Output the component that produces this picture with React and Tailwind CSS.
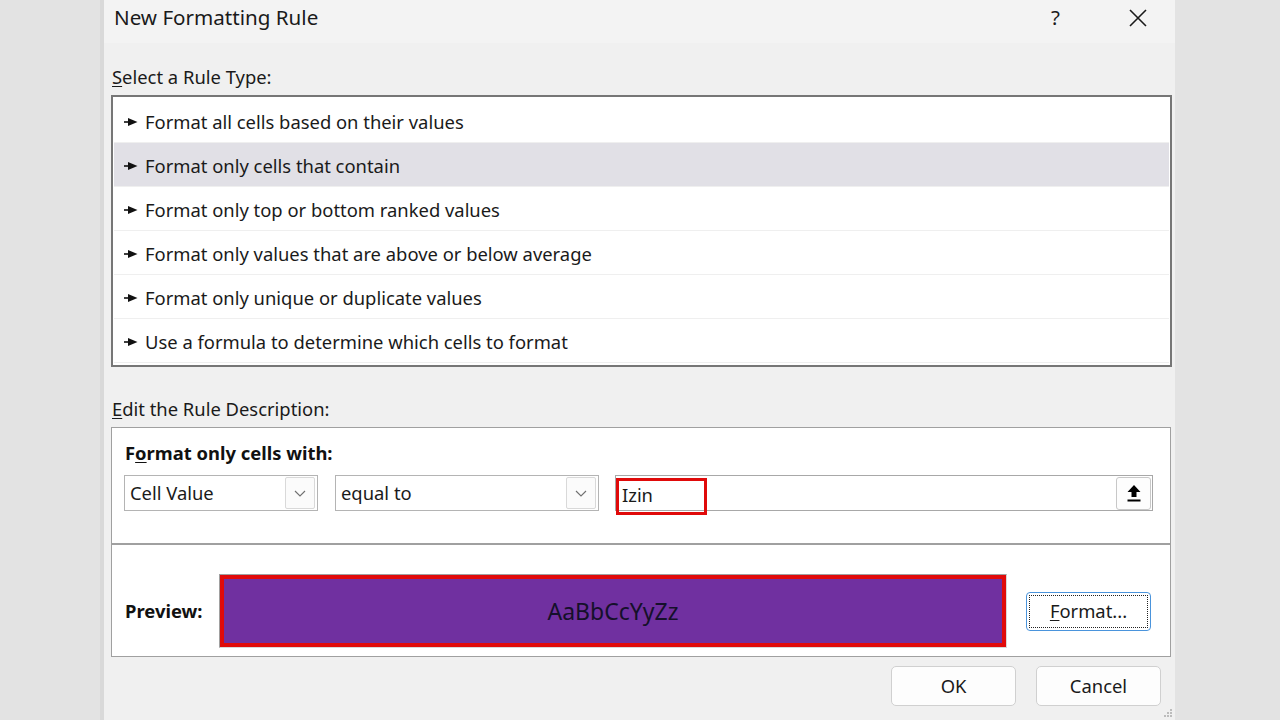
const font = { fontFamily: '"Noto Sans", "Open Sans", sans-serif' };

function RowArrow() {
  return (
    <svg width="14" height="10" viewBox="0 0 14 10" className="shrink-0">
      <line x1="0" y1="5" x2="6" y2="5" stroke="#111" strokeWidth="1.6" />
      <polygon points="4,1 13.5,5 4,9" fill="#111" />
    </svg>
  );
}

function Chevron() {
  return (
    <svg width="14" height="10" viewBox="0 0 14 10">
      <polyline points="2,3 7,8 12,3" fill="none" stroke="#707070" strokeWidth="1.1" />
    </svg>
  );
}

function Select({ label, width }) {
  return (
    <div className={`flex h-[36px] items-center justify-between border border-[#b4b4b4] bg-white pl-[5px] pr-[2px] ${width}`}>
      <span className="text-[18.4px] text-[#1a1a1a]">{label}</span>
      <div className="flex h-[32px] w-[30px] items-center justify-center rounded-[2px] border border-[#d9d9d9] bg-[#fbfbfb]">
        <Chevron />
      </div>
    </div>
  );
}

const rules = [
  "Format all cells based on their values",
  "Format only cells that contain",
  "Format only top or bottom ranked values",
  "Format only values that are above or below average",
  "Format only unique or duplicate values",
  "Use a formula to determine which cells to format",
];

export default function App() {
  return (
    <div className="h-[720px] w-full overflow-hidden bg-[#e3e3e3]" style={font}>
      <div className="relative ml-[100px] flex h-[720px] w-[1075px] flex-col border-l-4 border-[#d9d9d9] bg-[#f0f0f0]">
        {/* Title bar */}
        <div className="flex h-[43px] items-start bg-[#f3f3f3] pl-[10px] pt-[2px]">
          <span className="text-[20.6px] leading-[30px] text-[#1a1a1a]">New Formatting Rule</span>
          <span className="ml-auto mr-[68px] text-[20.6px] leading-[30px] text-[#1a1a1a]">?</span>
          <svg width="20" height="20" viewBox="0 0 20 20" className="mr-[27px] mt-[6px]">
            <path d="M2 2 L18 18 M18 2 L2 18" stroke="#1a1a1a" strokeWidth="1.6" />
          </svg>
        </div>

        <div className="flex flex-1 flex-col pl-[7px] pr-[3px]">
          {/* Rule type */}
          <div className="flex h-[52px] items-end pb-[5px] pl-[1px]">
            <span className="text-[18.4px] leading-[26px] text-[#1a1a1a]">
              <span className="underline underline-offset-2">S</span>elect a Rule Type:
            </span>
          </div>
          <div className="flex h-[272px] flex-col border-2 border-[#767676] bg-white px-[1px] pt-[2px]">
            {rules.map((r, i) => (
              <div
                key={r}
                className={`flex h-[44px] shrink-0 items-center gap-[7px] border-b border-[#efefef] pl-[10px] pt-[2px] ${i === 1 ? "bg-[#e1e0e6]" : ""}`}
              >
                <RowArrow />
                <span className="text-[18.4px] text-[#1a1a1a]">{r}</span>
              </div>
            ))}
          </div>

          {/* Rule description */}
          <div className="flex h-[60px] items-end pb-[5px] pl-[1px]">
            <span className="text-[18.4px] leading-[26px] text-[#1a1a1a]">
              <span className="underline underline-offset-2">E</span>dit the Rule Description:
            </span>
          </div>
          <div className="mr-[1px] flex h-[230px] flex-col border border-[#a0a0a0] bg-white">
            <div className="h-[47px] pl-[13px] pt-[12px]">
              <span className="text-[18.4px] font-bold leading-[26px] text-[#111]">
                F<span className="underline underline-offset-2">o</span>rmat only cells with:
              </span>
            </div>
            <div className="flex h-[36px] items-start pl-[12px]">
              <Select label="Cell Value" width="w-[194px]" />
              <div className="ml-[17px]">
                <Select label="equal to" width="w-[264px]" />
              </div>
              <div className="relative ml-[16px] flex h-[36px] w-[538px] items-center justify-end border border-[#a8a8a8] bg-white pr-[1px]">
                <span className="absolute left-[6px] top-[5px] text-[18.4px] text-[#1a1a1a]">Izin</span>
                <div className="absolute left-0 top-[2px] h-[37px] w-[91px] border-[3px] border-[#e00a0a]" />
                <div className="flex h-[33px] w-[35px] items-center justify-center rounded-[3px] border border-[#c8c8c8] bg-[#fdfdfd]">
                  <svg width="16" height="20" viewBox="0 0 16 20">
                    <path d="M8 2 L14.5 9 L10.5 9 L10.5 14 L5.5 14 L5.5 9 L1.5 9 Z" fill="#000" />
                    <rect x="1.5" y="16.5" width="13" height="2" fill="#000" />
                  </svg>
                </div>
              </div>
            </div>
            <div className="mt-[32px] h-[2px] bg-[#a0a0a0]" />
            <div className="flex items-center pl-[13px] pt-[29px]">
              <span className="w-[94px] text-[18.4px] font-bold text-[#111]">Preview:</span>
              <div className="h-[74px] w-[788px] border border-[#a0a0a0] border-r-[#d8d8d8] border-b-[#d8d8d8]">
                <div className="flex h-full items-center justify-center border-[4px] border-[#e00a0a] bg-[#7030a0]">
                  <span className="text-[23px] text-[#15102a]">AaBbCcYyZz</span>
                </div>
              </div>
              <div className="ml-[19px] flex h-[39px] w-[125px] items-center justify-center rounded-[4px] border border-[#4a94dc] bg-white p-[2px]">
                <div className="flex h-full w-full items-center justify-center border border-dotted border-[#222]">
                  <span className="text-[18.4px] text-[#1a1a1a]">
                    <span className="underline underline-offset-2">F</span>ormat...
                  </span>
                </div>
              </div>
            </div>
          </div>

          {/* Buttons */}
          <div className="flex justify-end gap-[20px] pr-[11px] pt-[9px]">
            {["OK", "Cancel"].map((b) => (
              <div
                key={b}
                className="flex h-[40px] w-[125px] items-center justify-center rounded-[5px] border border-[#d0d0d0] bg-[#fdfdfd]"
              >
                <span className="text-[18.4px] text-[#1a1a1a]">{b}</span>
              </div>
            ))}
          </div>
        </div>

        <svg width="10" height="10" viewBox="0 0 10 10" className="absolute bottom-[2px] right-[2px]">
          <rect x="7" y="1" width="2" height="2" fill="#bcbcbc" />
          <rect x="4" y="4" width="2" height="2" fill="#bcbcbc" />
          <rect x="7" y="4" width="2" height="2" fill="#bcbcbc" />
          <rect x="1" y="7" width="2" height="2" fill="#bcbcbc" />
          <rect x="4" y="7" width="2" height="2" fill="#bcbcbc" />
          <rect x="7" y="7" width="2" height="2" fill="#bcbcbc" />
        </svg>
      </div>
    </div>
  );
}
